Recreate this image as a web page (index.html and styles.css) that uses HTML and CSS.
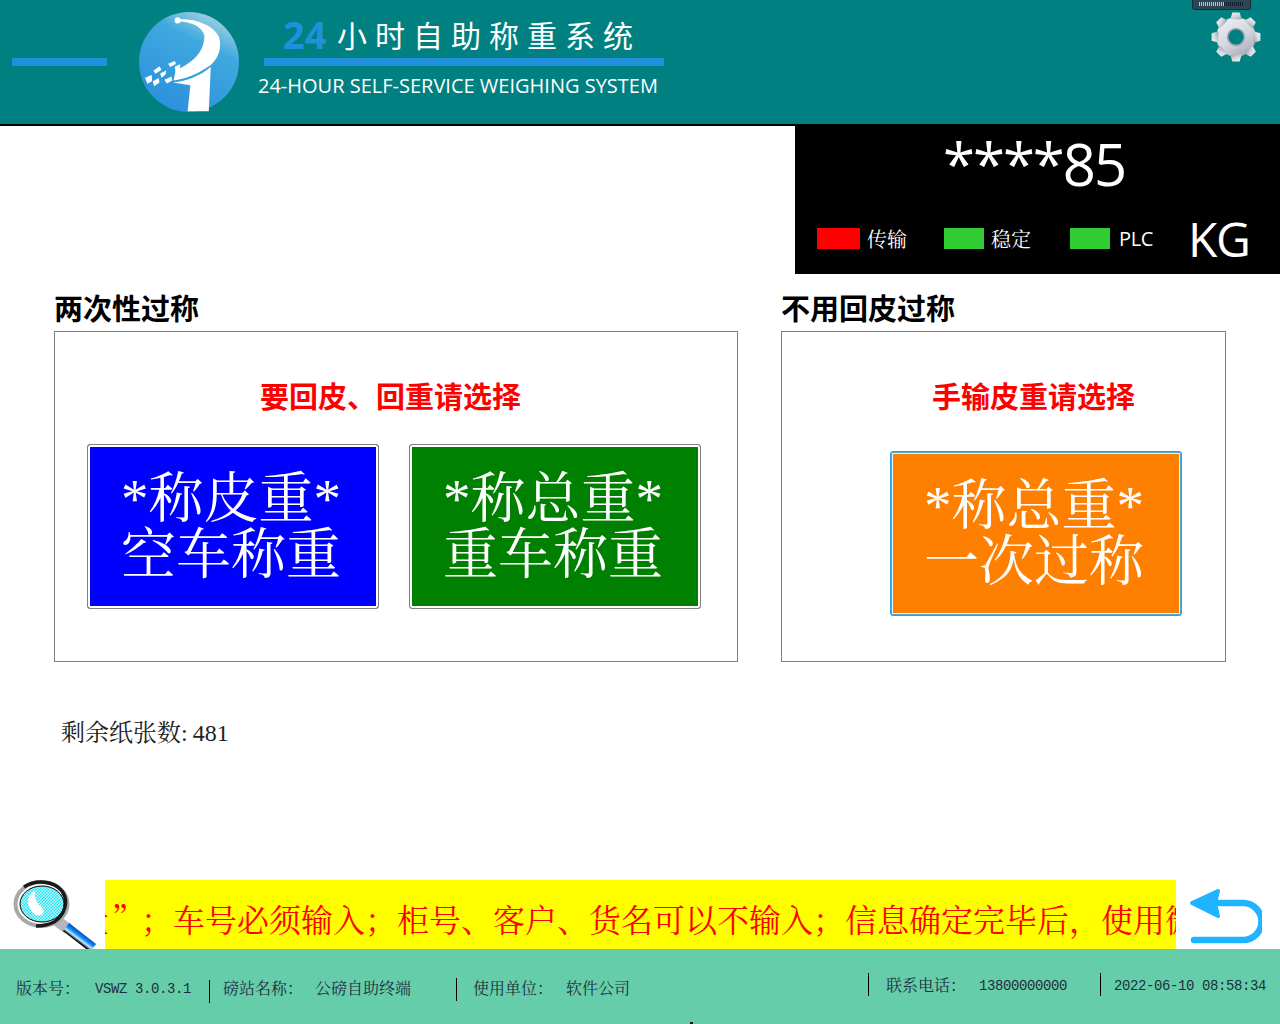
FILE: index.html
```html
<!DOCTYPE html>
<html lang="zh-CN">
<head>
<meta charset="utf-8">
<title>24小时自助称重系统</title>
<link rel="stylesheet" href="styles.css">
</head>
<body>
<div class="page">
  <header class="header">
    <div class="lead-bar"></div>
    <svg class="logo" viewBox="27 22 298 298" width="100" height="100">
      <defs>
        <linearGradient id="logoFill" x1="0.75" y1="0" x2="0.25" y2="1">
          <stop offset="0" stop-color="#a8d4e2"/>
          <stop offset="0.3" stop-color="#3fa9df"/>
          <stop offset="1" stop-color="#2b8fdc"/>
        </linearGradient>
      </defs>
      <circle cx="176" cy="171" r="149" fill="url(#logoFill)"/>
      <circle cx="142" cy="47" r="9" fill="#fff"/>
      <path class="logo-white" d="M142 44C190 40 245 58 265 95C276 130 262 160 241 180C200 208 165 222 130 226L136 196C175 178 222 150 222 92C215 66 185 50 142 50Z"/>
      <path class="logo-white" d="M241 186L235 318L172 318L180 240L128 232C170 228 210 212 241 186Z"/>
      <path class="logo-white" d="M45 218L65 210L66 228L52 236ZM70 197L88 184L94 194L76 206ZM90 205L108 196L106 208L94 218ZM114 176L134 168L137 177L120 186ZM133 185L150 178L149 193L137 202ZM103 224L124 214L126 226L110 235ZM68 228L86 219L88 232L72 243Z"/>
    </svg>
    <div class="title-block">
      <div class="title-cn"><span class="title-num">24</span><span class="title-text">小时自助称重系统</span></div>
      <div class="title-rule"></div>
      <div class="title-en">24-HOUR SELF-SERVICE WEIGHING SYSTEM</div>
    </div>
    <div class="handle">
      <span class="handle-on"></span><span class="handle-off"></span>
    </div>
    <svg class="gear" viewBox="-26 -26 52 52" width="54" height="54">
      <defs>
        <linearGradient id="gearFill" x1="0.2" y1="0" x2="0.8" y2="1">
          <stop offset="0" stop-color="#eef0f4"/>
          <stop offset="0.55" stop-color="#d2d5dc"/>
          <stop offset="1" stop-color="#a4a8b4"/>
        </linearGradient>
      </defs>
      <g class="gear-body">
        <circle r="19"/>
        <path id="tooth" d="M-5.5 -17L-3.5 -23.5L3.5 -23.5L5.5 -17Z"/>
        <use href="#tooth" transform="rotate(45)"/>
        <use href="#tooth" transform="rotate(90)"/>
        <use href="#tooth" transform="rotate(135)"/>
        <use href="#tooth" transform="rotate(180)"/>
        <use href="#tooth" transform="rotate(225)"/>
        <use href="#tooth" transform="rotate(270)"/>
        <use href="#tooth" transform="rotate(315)"/>
      </g>
      <circle class="gear-hole" r="8"/>
    </svg>
  </header>

  <main class="main">
    <section class="scale">
      <div class="scale-value">****85</div>
      <div class="scale-status">
        <span class="lamp lamp-red"></span><span class="lamp-label label-a">传输</span>
        <span class="lamp lamp-green lamp-b"></span><span class="lamp-label label-b">稳定</span>
        <span class="lamp lamp-green lamp-c"></span><span class="lamp-label label-c">PLC</span>
        <span class="scale-unit">KG</span>
      </div>
    </section>

    <div class="groups">
      <section class="group group-two">
        <h2 class="group-title">两次性过称</h2>
        <div class="panel">
          <p class="panel-hint">要回皮、回重请选择</p>
          <div class="buttons">
            <button class="action action-blue">*称皮重*<br>空车称重</button>
            <button class="action action-green">*称总重*<br>重车称重</button>
          </div>
        </div>
      </section>
      <section class="group group-one">
        <h2 class="group-title">不用回皮过称</h2>
        <div class="panel">
          <p class="panel-hint">手输皮重请选择</p>
          <div class="buttons">
            <button class="action action-orange">*称总重*<br>一次过称</button>
          </div>
        </div>
      </section>
    </div>

    <p class="paper">剩余纸张数<span class="paper-colon">:</span>481</p>

    <div class="ticker-row">
      <svg class="magnifier" viewBox="0 0 90 69" width="90" height="69">
        <defs>
          <pattern id="dots" width="3" height="3" patternUnits="userSpaceOnUse">
            <rect width="3" height="3" fill="#22e2ee"/>
            <rect width="1.5" height="1.5" fill="#c8faff"/>
            <rect x="1.5" y="1.5" width="1.5" height="1.5" fill="#c8faff"/>
          </pattern>
          <linearGradient id="handleFill" gradientUnits="userSpaceOnUse" x1="73" y1="53" x2="67" y2="61">
            <stop offset="0" stop-color="#003cc0"/>
            <stop offset="0.45" stop-color="#1490f5"/>
            <stop offset="0.75" stop-color="#c4ecff"/>
            <stop offset="1" stop-color="#000"/>
          </linearGradient>
        </defs>
        <path class="mag-collar" d="M46 40L58 49"/>
        <path class="mag-handle-fill" d="M56 47L83 68"/>
        <ellipse class="mag-ring-out" cx="31.5" cy="24" rx="26" ry="22"/>
        <path class="mag-ring-dark" d="M14 7C26 -1 44 1 52 11C59 21 55 35 44 42C38 45 32 46 26 46"/>
        <ellipse class="mag-glass" cx="32" cy="24" rx="22" ry="18"/>
        <path class="mag-shine" d="M25 11C17 15 15 24 24 34C31 38 36 33 32 27C27 24 24 18 25 11Z"/>
      </svg>
      <div class="ticker"><span class="ticker-text">量<span class="ticker-quote">”</span>；车号必须输入；柜号、客户、货名可以不输入；信息确定完毕后，使用微</span></div>
      <svg class="back" viewBox="0 0 74 56" width="74" height="56">
        <path class="back-line" d="M28 15H55A18.5 18.5 0 0 1 55 52H6"/>
        <path class="back-head" d="M30 3L4 15L30 28L27 15Z"/>
      </svg>
    </div>
  </main>

  <footer class="footer">
    <div class="foot-left">
      <span class="foot-label">版本号：</span><span class="foot-value v-version">VSWZ 3.0.3.1</span>
      <span class="foot-sep sep-1"></span>
      <span class="foot-label">磅站名称：</span><span class="foot-value v-station">公磅自助终端</span>
      <span class="foot-sep sep-2"></span>
      <span class="foot-label">使用单位：</span><span class="foot-value v-company">软件公司</span>
    </div>
    <div class="foot-right">
      <span class="foot-sep sep-3"></span>
      <span class="foot-label">联系电话：</span><span class="foot-value v-phone">13800000000</span>
      <span class="foot-sep sep-4"></span>
      <span class="foot-value v-time">2022-06-10 08:58:34</span>
    </div>
    <span class="foot-mark"></span>
  </footer>
</div>
</body>
</html>
```

FILE: styles.css
```css
* { box-sizing: border-box; }
html, body { margin: 0; padding: 0; background: #fff; }
.page {
  width: 1280px; height: 1024px; overflow: hidden;
  display: flex; flex-direction: column;
  font-family: "Liberation Serif", "Noto Serif CJK SC", "Noto Sans CJK SC", serif;
}

/* header */
.header {
  position: relative; flex: none; height: 126px;
  background: #008080; border-bottom: 2px solid #000;
  display: flex; align-items: flex-start;
}
.lead-bar { width: 95px; height: 8px; margin: 58px 0 0 12px; background: #2090dc; }
.logo { margin: 12px 0 0 32px; flex: none; }
.logo-white { fill: #fff; }
.title-block { margin-left: 19px; width: 406px; position: relative; }
.title-cn { height: 58px; padding: 10px 0 0 25px; display: flex; align-items: center; color: #fff; }
.title-num { font: bold 38px/44px "Open Sans", sans-serif; color: #2090dc; width: 54px; }
.title-text { font: 400 30px/44px "Noto Sans CJK SC", sans-serif; letter-spacing: 8px; white-space: nowrap; }
.title-rule { height: 8px; margin-left: 6px; width: 400px; background: #2090dc; }
.title-en { font: 20px/24px "Open Sans", sans-serif; color: #fff; margin-top: 8px; white-space: nowrap; }
.handle {
  position: absolute; left: 1192px; top: 0; width: 59px; height: 10px;
  background: #2c4656; border: 1px solid #1a2c3a; border-top: 0; border-radius: 0 0 3px 3px;
  display: flex; padding: 2px 6px 0;
}
.handle-on { width: 25px; height: 4px; background: repeating-linear-gradient(90deg, #9ad8c8 0 1px, transparent 1px 2px); }
.handle-off { width: 20px; height: 4px; background: repeating-linear-gradient(90deg, #0f1d28 0 1px, transparent 1px 2px); }
.gear { position: absolute; left: 1209px; top: 10px; }
.gear-body { fill: url(#gearFill); }
.gear-hole { fill: #008080; stroke: #9a9fab; stroke-width: 1.5; }

/* main */
.main { flex: 1; min-height: 0; display: flex; flex-direction: column; }
.scale {
  margin: -2px 0 0 795px; width: 485px; height: 150px; background: #000; color: #fff; flex: none;
}
.scale-value { height: 82px; padding: 5px 0 0 148px; font: 58px/70px "Open Sans", sans-serif; letter-spacing: -2px; }
.scale-status { position: relative; display: flex; align-items: center; height: 68px; padding: 0 0 3px 22px; }
.lamp { width: 40px; height: 21px; flex: none; }
.lamp-red { background: #f00; width: 43px; }
.lamp-green { background: #32cd32; }
.lamp-b { margin-left: 37px; }
.lamp-c { margin-left: 39px; }
.lamp-label { font: 20px/24px "Noto Serif CJK SC", "Noto Sans CJK SC", sans-serif; margin-left: 7px; width: 40px; white-space: nowrap; }
.label-c { font-family: "Open Sans", sans-serif; margin-left: 9px; letter-spacing: -0.4px; }
.scale-unit { font: 48px/56px "Open Sans", sans-serif; margin-left: 29px; letter-spacing: -1.5px; }

/* groups */
.groups { display: flex; align-items: flex-start; gap: 43px; margin: 16px 0 0 54px; }
.group-two { width: 684px; }
.group-one { width: 445px; }
.group-title { margin: 0; font: bold 29px/35px "Noto Sans CJK SC", sans-serif; color: #000; height: 41px; }
.panel { height: 331px; border: 1px solid #808080; background: #fff; padding-top: 44px; }
.panel-hint { margin: 0; height: 44px; font: bold 29px/39px "Noto Sans CJK SC", sans-serif; color: #f00; white-space: nowrap; }
.group-two .panel-hint { padding-left: 205px; }
.group-one .panel-hint { padding-left: 150px; }
.buttons { display: flex; gap: 30px; margin-top: 24px; padding-left: 32px; }
.group-one .buttons { margin-top: 31px; padding-left: 108px; }
.action {
  width: 292px; height: 165px; padding: 0 4px 0 0; border: 1px solid #808080; border-radius: 3px;
  box-shadow: inset 0 0 0 2px #fff; color: #fff;
  font: 55px/56px "Liberation Serif", "Noto Serif CJK SC", "Noto Sans CJK SC", serif;
}
.action-blue { background-color: #00f; }
.action-green { background-color: #008000; }
.action-orange {
  background-color: #ff8000; border-color: #2aa0e0;
  box-shadow: inset 0 0 0 1px #4aaee2, inset 0 0 0 2px #e8f4fa;
}

.paper { margin: 56px 0 0 61px; font-size: 24px; line-height: 30px; color: #222; }
.paper-colon { margin-right: 5px; }

/* ticker */
.ticker-row { margin-top: auto; height: 69px; display: flex; align-items: flex-start; flex: none; }
.magnifier { margin-left: 10px; flex: none; }
.ticker {
  margin-left: 5px; width: 1071px; height: 69px; background: #ff0; overflow: hidden; flex: none;
  font: 32px/76px "Noto Serif CJK SC", "Noto Sans CJK SC", serif; color: #f00; white-space: nowrap;
}
.ticker-text { display: inline-block; margin-left: -28px; }
.ticker-quote { display: inline-block; width: 32px; padding-left: 3px; }
.back { margin: 8px 0 0 12px; flex: none; }
.back-line { fill: none; stroke: #1fb4ff; stroke-width: 6.5; stroke-linecap: round; }
.back-head { fill: #1fb4ff; stroke: #1fb4ff; stroke-width: 4; stroke-linejoin: round; }
.mag-collar { stroke: #b4b8bc; stroke-width: 11; fill: none; }
.mag-handle-fill { stroke: url(#handleFill); stroke-width: 10; fill: none; }
.mag-ring-out { fill: #fff; stroke: #a8a8a8; stroke-width: 4; }
.mag-ring-dark { fill: none; stroke: #1a1a1a; stroke-width: 3.5; }
.mag-glass { fill: url(#dots); stroke: #000; stroke-width: 1; }
.mag-shine { fill: #fff; }

/* footer */
.footer {
  flex: none; height: 75px; background: #66cdaa; position: relative;
  display: flex; justify-content: space-between; color: #1f2d3d;
  font-family: "Liberation Mono", "Noto Serif CJK SC", monospace; font-size: 16px;
}
.foot-left, .foot-right { display: flex; align-items: flex-start; white-space: nowrap; }
.foot-left { padding: 29px 0 0 16px; }
.foot-right { padding: 24px 14px 0 0; }
.foot-label, .foot-value { line-height: 20px; }
.foot-label { font-family: "Noto Serif CJK SC", "Noto Sans CJK SC", sans-serif; font-size: 16px; }
.foot-value { font-size: 14px; letter-spacing: -0.4px; line-height: 22px; }
.foot-right .foot-label { padding-top: 2px; }
.foot-right .foot-value { line-height: 26px; }
.v-version { margin-left: 15px; width: 96px; }
.v-station, .v-company { font-family: "Noto Serif CJK SC", "Noto Sans CJK SC", sans-serif; font-size: 16px; letter-spacing: 0; line-height: 20px; margin-left: 14px; }
.v-station { width: 96px; margin-left: 12px; }
.v-company { margin-left: 13px; }
.v-phone { margin-left: 13px; width: 90px; }
.foot-sep { width: 1px; height: 23px; background: #000; flex: none; }
.sep-1 { margin: 2px 13px 0 18px; }
.sep-2 { margin: 0 16px 0 45px; }
.sep-3 { margin: 0 17px 0 0; }
.sep-4 { margin: 0 13px 0 31px; }
.foot-mark { position: absolute; left: 690px; bottom: 0; width: 3px; height: 2px; background: #1a1a1a; }
```
